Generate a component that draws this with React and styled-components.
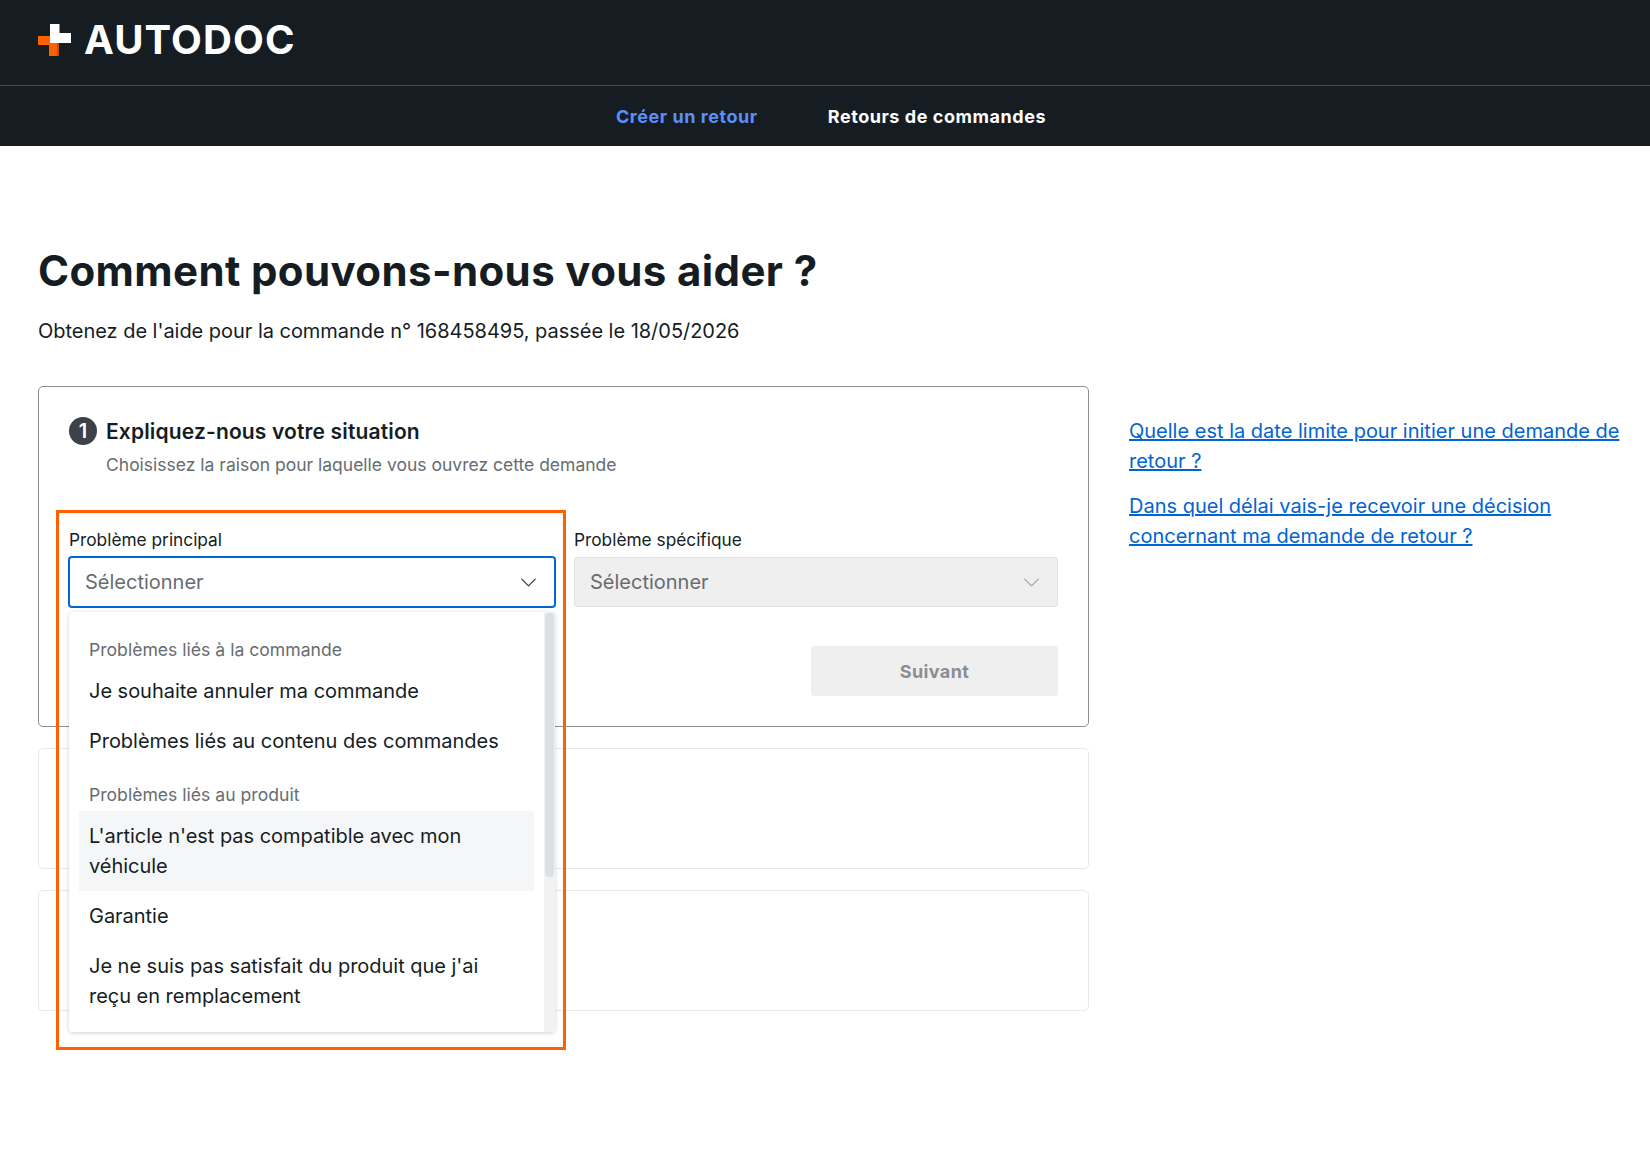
import React from 'react';
import styled, { createGlobalStyle } from 'styled-components';
import { ChevronDown } from 'lucide-react';

const GlobalStyle = createGlobalStyle`
  * {
    box-sizing: border-box;
  }

  body {
    margin: 0;
    background: #ffffff;
    color: #151d23;
    font-family: Inter, "Liberation Sans", sans-serif;
  }
`;

const Page = styled.div`
  width: 1650px;
  height: 1158px;
  overflow: hidden;
`;

const TopBar = styled.div`
  height: 86px;
  padding: 0 0 6px 38px;
  display: flex;
  align-items: center;
  gap: 13px;
  background: #151d23;
  border-bottom: 1px solid #464d52;
`;

const LogoText = styled.span`
  font-size: 40px;
  font-weight: 700;
  line-height: 40px;
  letter-spacing: 1.1px;
  color: #ffffff;
`;

const Nav = styled.nav`
  height: 60px;
  padding-left: 12px;
  display: flex;
  align-items: center;
  justify-content: center;
  gap: 70px;
  background: #151d23;
`;

const NavLink = styled.a`
  font-size: 18px;
  font-weight: 700;
  letter-spacing: 0.55px;
  color: ${(p) => (p.$active ? '#5c8ffb' : '#ffffff')};
`;

const Main = styled.main`
  padding: 101px 20px 0 38px;
`;

const Title = styled.h1`
  margin: 0;
  font-size: 42px;
  line-height: 48px;
  font-weight: 700;
  letter-spacing: 0.38px;
  color: #151d23;
`;

const Lead = styled.p`
  margin: 21px 0 0;
  font-size: 20px;
  line-height: 30px;
  letter-spacing: -0.03px;
`;

const Columns = styled.div`
  margin-top: 40px;
  display: flex;
  gap: 40px;
`;

const Steps = styled.div`
  width: 1051px;
  display: flex;
  flex-direction: column;
  gap: 21px;
`;

const ActiveCard = styled.section`
  height: 341px;
  padding: 30px 30px 0;
  border: 1px solid #8a8f93;
  border-radius: 5px;
`;

const EmptyCard = styled.section`
  height: 121px;
  border: 1px solid #e6e8ea;
  border-radius: 5px;
`;

const StepHead = styled.div`
  display: flex;
  align-items: center;
  gap: 9px;
  height: 28px;
`;

const StepBadge = styled.span`
  width: 28px;
  height: 28px;
  display: flex;
  align-items: center;
  justify-content: center;
  border-radius: 50%;
  background: #3c4248;
  color: #ffffff;
  font-size: 20px;
  font-weight: 600;
`;

const StepTitle = styled.h2`
  margin: 0;
  font-size: 21px;
  font-weight: 600;
  letter-spacing: 0.15px;
`;

const StepHint = styled.p`
  margin: 5px 0 0 37px;
  font-size: 17.5px;
  line-height: 30px;
  color: #676c71;
`;

const Fields = styled.div`
  margin-top: 45px;
  display: grid;
  grid-template-columns: 486px 484px;
  gap: 19px;
`;

const Field = styled.div`
  position: relative;
`;

const FieldLabel = styled.label`
  display: block;
  height: 32px;
  font-size: 17.3px;
  line-height: 30px;
`;

const Select = styled.div`
  height: 50px;
  padding: 0 12px 0 15px;
  display: flex;
  align-items: center;
  justify-content: space-between;
  border-radius: 3px;
  font-size: 20px;
  color: #676c71;
  background: ${(p) => (p.$disabled ? '#efefef' : '#ffffff')};
  border: 1px solid ${(p) => (p.$disabled ? '#dfe1e3' : '#0064d2')};
  box-shadow: ${(p) => (p.$disabled ? 'none' : '0 0 0 1px #0064d2')};

  svg {
    color: ${(p) => (p.$disabled ? '#a6a9ac' : '#3c4248')};
  }
`;

const Dropdown = styled.div`
  position: absolute;
  top: 87px;
  left: 0;
  width: 486px;
  height: 420px;
  padding: 22px 21px 0 10px;
  background: #ffffff;
  border-radius: 4px;
  box-shadow: 0 1px 4px rgba(21, 29, 35, 0.2);
  z-index: 2;
`;

const ScrollTrack = styled.div`
  position: absolute;
  top: 0;
  right: 0;
  bottom: 0;
  width: 11px;
  background: #f1f2f3;
`;

const ScrollThumb = styled.div`
  height: 264px;
  margin: 1px 1px 0;
  border-radius: 4px;
  background: #dcdfe3;
`;

const GroupLabel = styled.div`
  height: 32px;
  padding: 0 10px;
  font-size: 17.6px;
  line-height: 32px;
  color: #676c71;
  margin-top: ${(p) => (p.$spaced ? '13px' : '0')};
`;

const Option = styled.div`
  padding: 10px;
  font-size: 20px;
  line-height: 30px;
  letter-spacing: -0.03px;
  color: #151d23;
  background: ${(p) => (p.$hover ? '#f5f6f8' : 'transparent')};
`;

const Highlight = styled.div`
  position: absolute;
  top: -15px;
  left: -13px;
  width: 510px;
  height: 540px;
  border: 3px solid #ff6000;
  z-index: 3;
  pointer-events: none;
`;

const Actions = styled.div`
  margin-top: 39px;
  display: flex;
  justify-content: flex-end;
`;

const NextButton = styled.button`
  width: 247px;
  height: 50px;
  border: none;
  border-radius: 3px;
  background: #efefef;
  color: #8b8e91;
  font-family: inherit;
  font-size: 18px;
  font-weight: 700;
  letter-spacing: 0.4px;
`;

const Faq = styled.aside`
  flex: 1;
  padding-top: 30px;
  display: flex;
  flex-direction: column;
  gap: 15px;
`;

const FaqLink = styled.a`
  font-size: 20px;
  line-height: 30px;
  color: #0064d2;
  text-decoration: underline;
`;

const LogoMark = () => (
  <svg width="33" height="32" viewBox="0 0 33 32">
    <path d="M0 12h12v9H0zM11 19h10v13H11z" fill="#ff6000" />
    <path d="M19 19h2v13h-2z" fill="#c84b00" />
    <path d="M12 0h9.500v9H33v10H12z" fill="#ffffff" />
  </svg>
);

const App = () => {
  return (
    <Page>
      <GlobalStyle />
      <header>
        <TopBar>
          <LogoMark />
          <LogoText>AUTODOC</LogoText>
        </TopBar>
        <Nav>
          <NavLink $active>Créer un retour</NavLink>
          <NavLink>Retours de commandes</NavLink>
        </Nav>
      </header>

      <Main>
        <Title>Comment pouvons-nous vous aider ?</Title>
        <Lead>Obtenez de l'aide pour la commande n° 168458495, passée le 18/05/2026</Lead>

        <Columns>
          <Steps>
            <ActiveCard>
              <StepHead>
                <StepBadge>1</StepBadge>
                <StepTitle>Expliquez-nous votre situation</StepTitle>
              </StepHead>
              <StepHint>Choisissez la raison pour laquelle vous ouvrez cette demande</StepHint>

              <Fields>
                <Field>
                  <Highlight />
                  <FieldLabel>Problème principal</FieldLabel>
                  <Select>
                    Sélectionner
                    <ChevronDown size={27} strokeWidth={1.2} />
                  </Select>
                  <Dropdown>
                    <ScrollTrack>
                      <ScrollThumb />
                    </ScrollTrack>
                    <GroupLabel>Problèmes liés à la commande</GroupLabel>
                    <Option>Je souhaite annuler ma commande</Option>
                    <Option>Problèmes liés au contenu des commandes</Option>
                    <GroupLabel $spaced>Problèmes liés au produit</GroupLabel>
                    <Option $hover>L'article n'est pas compatible avec mon véhicule</Option>
                    <Option>Garantie</Option>
                    <Option>Je ne suis pas satisfait du produit que j'ai reçu en remplacement</Option>
                  </Dropdown>
                </Field>
                <Field>
                  <FieldLabel>Problème spécifique</FieldLabel>
                  <Select $disabled>
                    Sélectionner
                    <ChevronDown size={27} strokeWidth={1.2} />
                  </Select>
                </Field>
              </Fields>

              <Actions>
                <NextButton>Suivant</NextButton>
              </Actions>
            </ActiveCard>
            <EmptyCard />
            <EmptyCard />
          </Steps>

          <Faq>
            <FaqLink>Quelle est la date limite pour initier une demande de retour ?</FaqLink>
            <FaqLink>Dans quel délai vais-je recevoir une décision concernant ma demande de retour ?</FaqLink>
          </Faq>
        </Columns>
      </Main>
    </Page>
  );
};

export default App;
